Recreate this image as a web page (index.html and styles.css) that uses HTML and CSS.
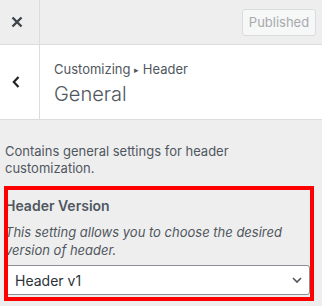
FILE: index.html
```
<!DOCTYPE html>
<html lang="en">
<head>
    <meta charset="UTF-8">
    <title>Customizer - Header</title>
    <link rel="stylesheet" href="styles.css">
</head>
<body>
    <div class="panel">
        <div class="topbar">
            <button class="close-btn" aria-label="Close">
                <svg width="12" height="12" viewBox="0 0 12 12"><path d="M1.5 1.5 L10.5 10.5 M10.5 1.5 L1.5 10.5" stroke="#3c434a" stroke-width="2.4" fill="none"/></svg>
            </button>
            <div class="topbar-actions">
                <button class="publish-btn" disabled>Published</button>
            </div>
        </div>

        <div class="section-head">
            <button class="back-btn" aria-label="Back">
                <svg width="8" height="12" viewBox="0 0 8 12"><path d="M6.5 1 L1.8 6 L6.5 11" stroke="#1d2327" stroke-width="2.2" fill="none"/></svg>
            </button>
            <div class="section-title">
                <span class="crumb">Customizing <span class="arrow">&#9656;</span> Header</span>
                <h2>General</h2>
            </div>
        </div>

        <div class="content">
            <p class="section-desc">Contains general settings for header customization.</p>

            <div class="control highlight">
                <span class="control-title">Header Version</span>
                <span class="control-desc">This setting allows you to choose the desired version of header.</span>
                <div class="select">
                    <span>Header v1</span>
                    <svg width="12" height="8" viewBox="0 0 12 8"><path d="M2 2 L6 6 L10 2" stroke="#50575e" stroke-width="1.6" fill="none"/></svg>
                </div>
            </div>
        </div>
    </div>
</body>
</html>
```

FILE: styles.css
```
body {
    margin: 0;
    background-color: #eeeeee;
    font-family: Inter, "Noto Sans", sans-serif;
    color: #50575e;
}
.panel {
    width: 322px;
    height: 306px;
    overflow: hidden;
}
button {
    font-family: inherit;
}
.topbar {
    display: flex;
    align-items: center;
    height: 44px;
    border-bottom: 1px solid #dcdcde;
}
.close-btn {
    width: 40px;
    height: 100%;
    padding: 0 6px 0 0;
    border: none;
    border-right: 1px solid #dcdcde;
    background: none;
    display: flex;
    align-items: center;
    justify-content: center;
}
.topbar-actions {
    flex: 1;
    display: flex;
    justify-content: flex-end;
    padding-right: 6px;
}
.publish-btn {
    width: 74px;
    height: 27px;
    font-size: 13px;
    color: #a7aaad;
    background-color: #f6f7f7;
    border: 1px solid #dcdcde;
    border-radius: 3px;
    padding: 0;
}
.section-head {
    display: flex;
    height: 74px;
    background-color: #fff;
    border-bottom: 1px solid #dcdcde;
}
.back-btn {
    width: 40px;
    padding: 0 7px 0 0;
    border: none;
    border-right: 1px solid #dcdcde;
    background: none;
    display: flex;
    align-items: center;
    justify-content: center;
}
.section-title {
    padding: 15px 0 0 14px;
}
.crumb {
    display: block;
    font-size: 13px;
    line-height: 18px;
    color: #50575e;
}
.arrow {
    font-size: 9px;
    vertical-align: 1px;
}
.section-title h2 {
    margin: 2px 0 0;
    font-size: 20px;
    font-weight: 300;
    line-height: 26px;
    color: #50575e;
}
.content {
    padding: 23px 0 0 0;
}
.section-desc {
    margin: 0 0 9px 5px;
    width: 280px;
    font-size: 13px;
    line-height: 17px;
    color: #50575e;
}
.control {
    position: relative;
    width: 305px;
    margin-left: 4px;
    padding: 8px 4px 6px 1px;
}
.highlight::after {
    content: "";
    position: absolute;
    inset: 0;
    border: 4px solid #ff0000;
}
.control-title {
    display: block;
    font-size: 14px;
    font-weight: 600;
    line-height: 24px;
    color: #50575e;
}
.control-desc {
    display: block;
    margin-top: 5px;
    font-size: 13px;
    font-style: italic;
    line-height: 18px;
    color: #50575e;
}
.select {
    display: flex;
    align-items: center;
    justify-content: space-between;
    margin-top: 6px;
    height: 28px;
    padding: 0 6px 0 9px;
    background-color: #fff;
    border: 1px solid #8c8f94;
    border-radius: 3px;
    font-size: 14px;
    color: #2c3338;
}
```
